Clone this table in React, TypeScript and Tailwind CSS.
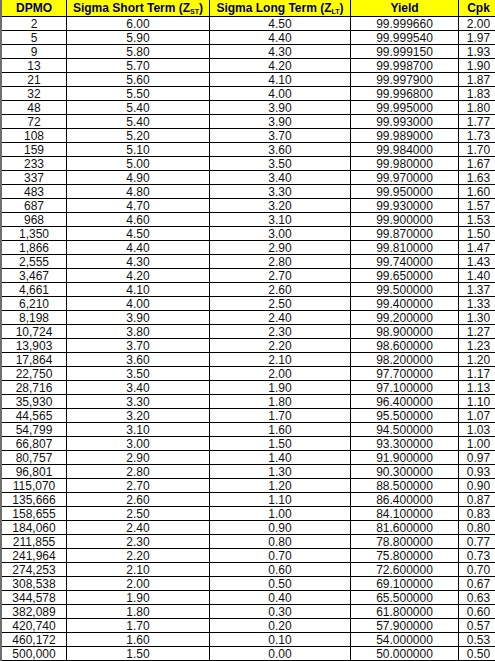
import React from "react";

const rows: string[][] = [
  ["2", "6.00", "4.50", "99.999660", "2.00"],
  ["5", "5.90", "4.40", "99.999540", "1.97"],
  ["9", "5.80", "4.30", "99.999150", "1.93"],
  ["13", "5.70", "4.20", "99.998700", "1.90"],
  ["21", "5.60", "4.10", "99.997900", "1.87"],
  ["32", "5.50", "4.00", "99.996800", "1.83"],
  ["48", "5.40", "3.90", "99.995000", "1.80"],
  ["72", "5.40", "3.90", "99.993000", "1.77"],
  ["108", "5.20", "3.70", "99.989000", "1.73"],
  ["159", "5.10", "3.60", "99.984000", "1.70"],
  ["233", "5.00", "3.50", "99.980000", "1.67"],
  ["337", "4.90", "3.40", "99.970000", "1.63"],
  ["483", "4.80", "3.30", "99.950000", "1.60"],
  ["687", "4.70", "3.20", "99.930000", "1.57"],
  ["968", "4.60", "3.10", "99.900000", "1.53"],
  ["1,350", "4.50", "3.00", "99.870000", "1.50"],
  ["1,866", "4.40", "2.90", "99.810000", "1.47"],
  ["2,555", "4.30", "2.80", "99.740000", "1.43"],
  ["3,467", "4.20", "2.70", "99.650000", "1.40"],
  ["4,661", "4.10", "2.60", "99.500000", "1.37"],
  ["6,210", "4.00", "2.50", "99.400000", "1.33"],
  ["8,198", "3.90", "2.40", "99.200000", "1.30"],
  ["10,724", "3.80", "2.30", "98.900000", "1.27"],
  ["13,903", "3.70", "2.20", "98.600000", "1.23"],
  ["17,864", "3.60", "2.10", "98.200000", "1.20"],
  ["22,750", "3.50", "2.00", "97.700000", "1.17"],
  ["28,716", "3.40", "1.90", "97.100000", "1.13"],
  ["35,930", "3.30", "1.80", "96.400000", "1.10"],
  ["44,565", "3.20", "1.70", "95.500000", "1.07"],
  ["54,799", "3.10", "1.60", "94.500000", "1.03"],
  ["66,807", "3.00", "1.50", "93.300000", "1.00"],
  ["80,757", "2.90", "1.40", "91.900000", "0.97"],
  ["96,801", "2.80", "1.30", "90.300000", "0.93"],
  ["115,070", "2.70", "1.20", "88.500000", "0.90"],
  ["135,666", "2.60", "1.10", "86.400000", "0.87"],
  ["158,655", "2.50", "1.00", "84.100000", "0.83"],
  ["184,060", "2.40", "0.90", "81.600000", "0.80"],
  ["211,855", "2.30", "0.80", "78.800000", "0.77"],
  ["241,964", "2.20", "0.70", "75.800000", "0.73"],
  ["274,253", "2.10", "0.60", "72.600000", "0.70"],
  ["308,538", "2.00", "0.50", "69.100000", "0.67"],
  ["344,578", "1.90", "0.40", "65.500000", "0.63"],
  ["382,089", "1.80", "0.30", "61.800000", "0.60"],
  ["420,740", "1.70", "0.20", "57.900000", "0.57"],
  ["460,172", "1.60", "0.10", "54.000000", "0.53"],
  ["500,000", "1.50", "0.00", "50.000000", "0.50"],
];

const cols = "grid grid-cols-[65px_143px_141px_108px_40px]";

function Head({ children }: { children: React.ReactNode }) {
  return (
    <div className="h-[17px] border-r border-b border-black flex items-center justify-center font-bold text-[12px] leading-none text-[#000066] whitespace-nowrap">
      {children}
    </div>
  );
}

export default function App() {
  return (
    <div
      className="w-[495px] h-[661px] overflow-hidden bg-white flex"
      style={{ fontFamily: '"Liberation Sans", Arial, sans-serif' }}
    >
      <div className="w-[2px] shrink-0 bg-[#6e6e6e]" />
      <div className="flex flex-col w-[497px] shrink-0">
        <div className={`${cols} bg-[#ffff00]`}>
          <Head>DPMO</Head>
          <Head>
            <span>
              Sigma Short Term (Z<sub className="text-[7px] align-baseline relative top-[2px]">ST</sub>)
            </span>
          </Head>
          <Head>
            <span>
              Sigma Long Term (Z<sub className="text-[7px] align-baseline relative top-[2px]">LT</sub>)
            </span>
          </Head>
          <Head>Yield</Head>
          <Head>Cpk</Head>
        </div>
        {rows.map((r, i) => (
          <div key={i} className={cols}>
            {r.map((c, j) => (
              <div
                key={j}
                className="h-[14px] border-r border-b border-black flex items-center justify-center text-[12px] leading-none text-[#111]"
              >
                {c}
              </div>
            ))}
          </div>
        ))}
      </div>
    </div>
  );
}
